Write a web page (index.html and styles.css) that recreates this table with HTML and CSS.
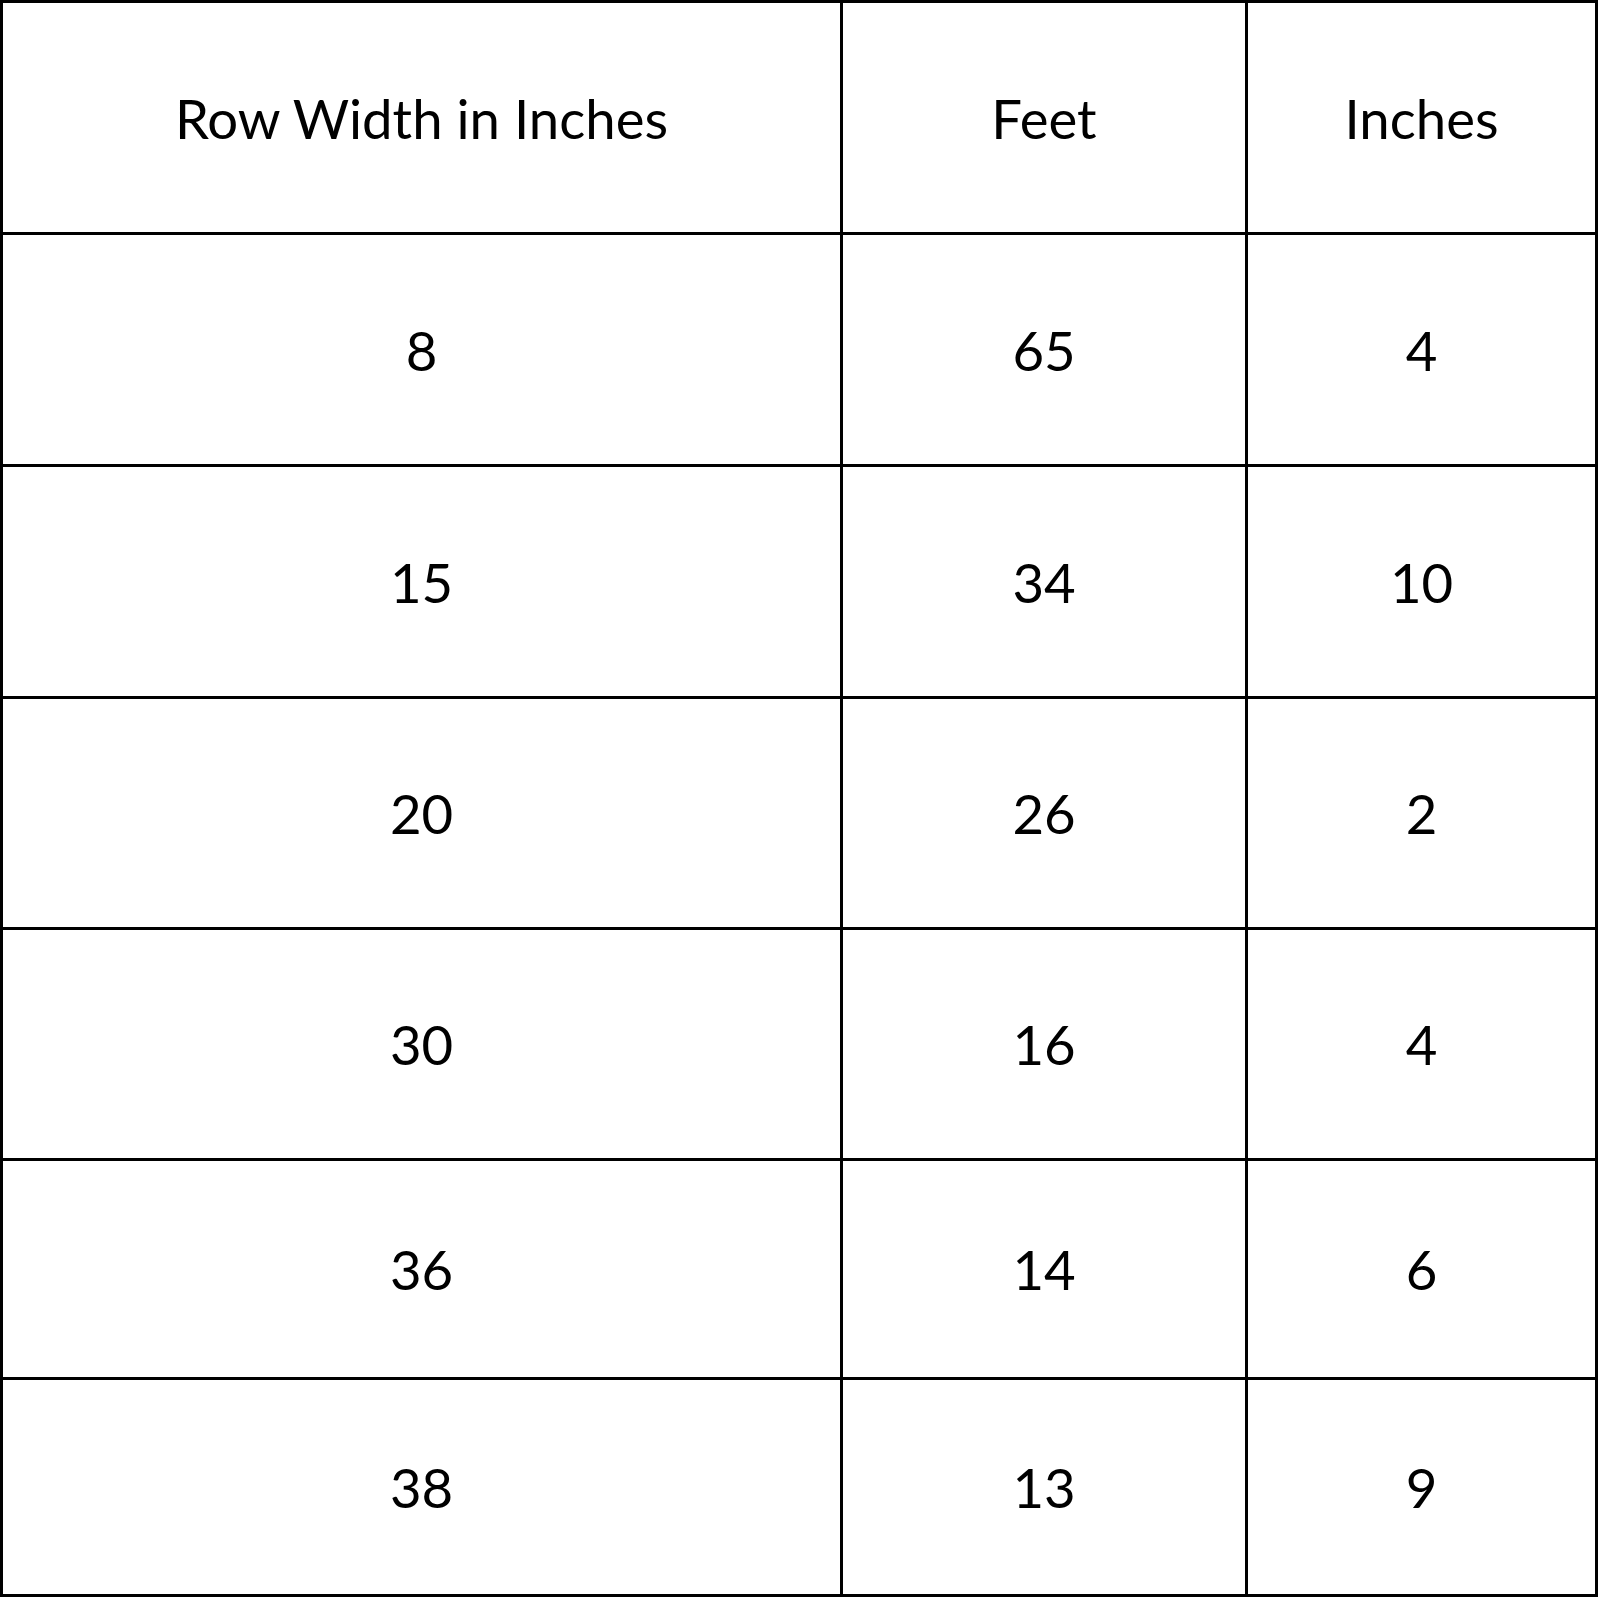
FILE: index.html
```html
<!DOCTYPE html>
<html>
<head>
<meta charset="utf-8">
<link rel="stylesheet" href="styles.css">
</head>
<body>
<div class="table">
  <div class="cell">Row Width in Inches</div><div class="cell">Feet</div><div class="cell">Inches</div>
  <div class="cell">8</div><div class="cell">65</div><div class="cell">4</div>
  <div class="cell">15</div><div class="cell">34</div><div class="cell">10</div>
  <div class="cell">20</div><div class="cell">26</div><div class="cell">2</div>
  <div class="cell">30</div><div class="cell">16</div><div class="cell">4</div>
  <div class="cell">36</div><div class="cell">14</div><div class="cell">6</div>
  <div class="cell">38</div><div class="cell">13</div><div class="cell">9</div>
</div>
</body>
</html>
```
FILE: styles.css
```css
html, body {
  margin: 0;
  padding: 0;
  background: #fff;
}
.table {
  display: grid;
  width: 1598px;
  box-sizing: border-box;
  padding: 3px;
  gap: 3px;
  background: #000;
  grid-template-columns: 837px 402px 347px;
  grid-template-rows: 229px 229px 229px 228px 228px 216px 214px;
}
.cell {
  background: #fff;
  display: flex;
  align-items: center;
  justify-content: center;
  font-family: Lato, "Open Sans", sans-serif;
  font-size: 54.5px;
  color: #000;
}
```
